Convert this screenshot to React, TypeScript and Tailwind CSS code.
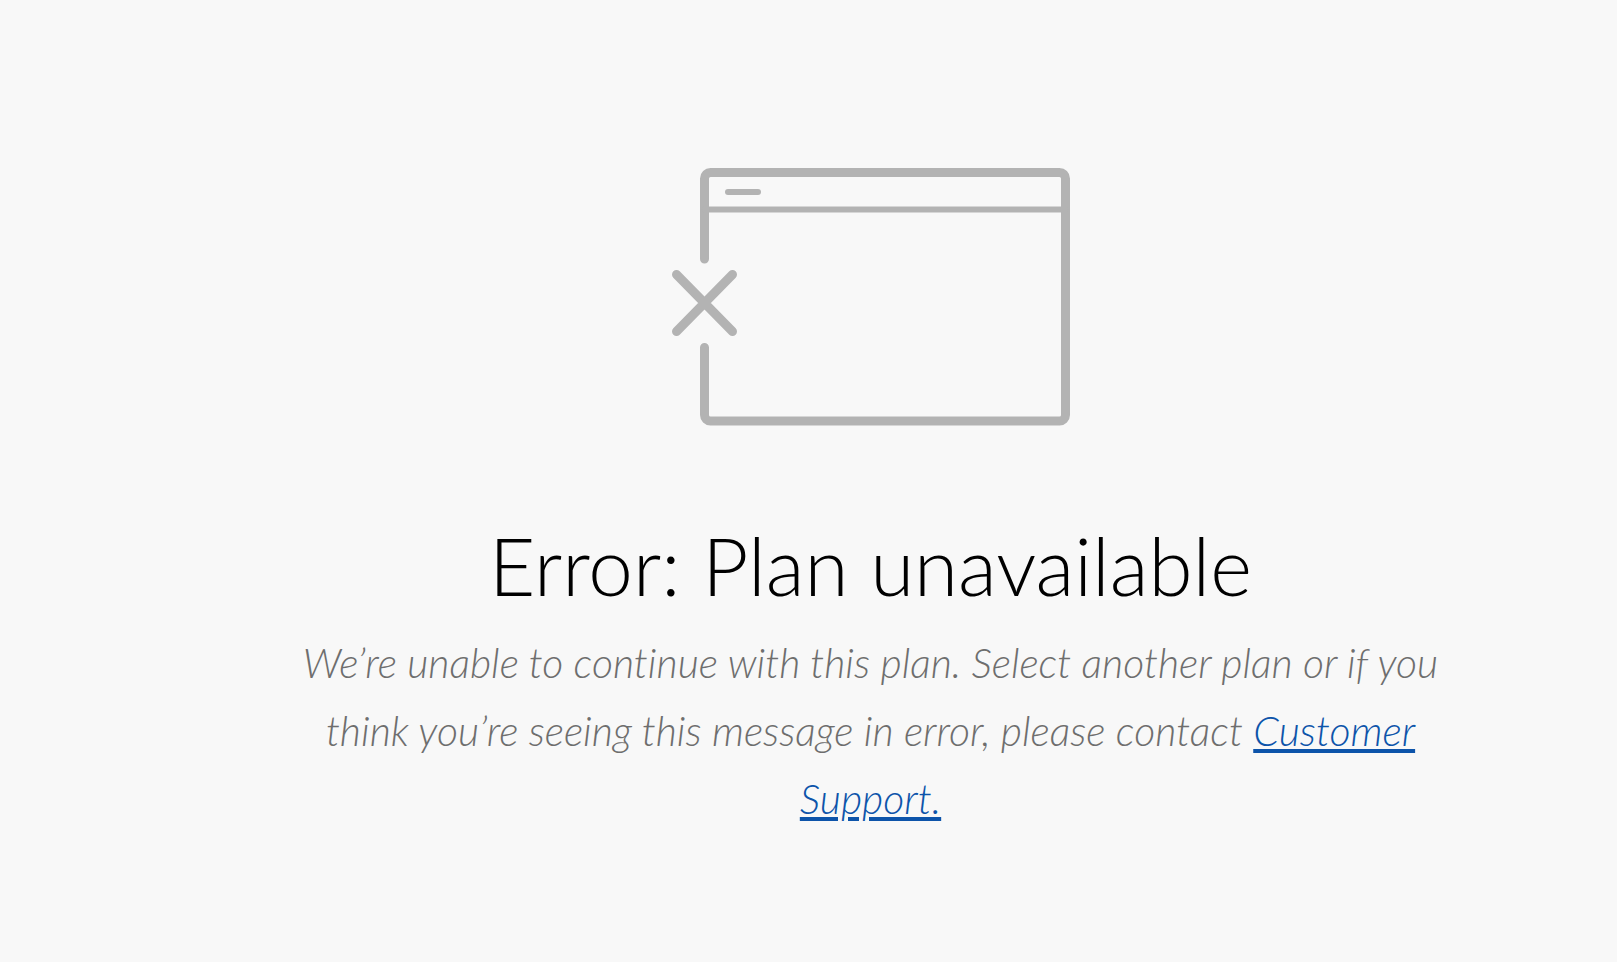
const BrokenWindow = () => (
  <svg
    viewBox="0 0 398 258"
    className="w-[398px] max-w-full"
    fill="none"
    stroke="#b3b3b3"
    strokeLinecap="round"
    aria-hidden="true"
  >
    {/* Frame, open on the left side */}
    <path
      d="M32.5 91V10.5a6 6 0 0 1 6-6h349a6 6 0 0 1 6 6v236.5a6 6 0 0 1-6 6h-349a6 6 0 0 1-6-6V179.5"
      strokeWidth="9"
    />
    {/* Title bar */}
    <path d="M33 41.5h360" strokeWidth="6" />
    <path d="M56 24h30" strokeWidth="6" />
    {/* Cross */}
    <path d="M4.5 106.5l56 57M60.5 106.5l-56 57" strokeWidth="9" />
  </svg>
);

const App = () => {
  return (
    <main className="min-h-screen bg-[#f8f8f8] pt-42 pb-24 pl-31">
      <div className="mx-auto flex max-w-[1180px] flex-col items-center text-center font-['Lato','Open_Sans',sans-serif]">
        <BrokenWindow />

        <h1 className="mt-[89px] text-[80px] leading-[100px] font-light text-black">
          Error: Plan unavailable
        </h1>

        <p className="mt-[14px] text-[41px] leading-[68px] font-light text-[#6e6e6e] italic [font-variant-ligatures:none]">
          We’re unable to continue with this plan. Select another plan or if
          you think you’re seeing this message in error, please contact{" "}
          <a
            href="#support"
            className="text-[#0d54aa] underline decoration-4 underline-offset-3"
          >
            Customer Support.
          </a>
        </p>
      </div>
    </main>
  );
};

export default App;
